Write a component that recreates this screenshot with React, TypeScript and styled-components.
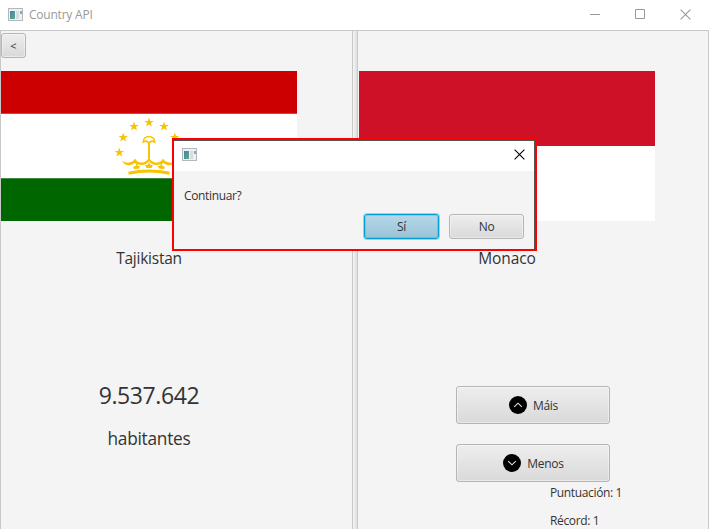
import React from "react";
import styled, { createGlobalStyle } from "styled-components";

const GlobalStyle = createGlobalStyle`
  * { box-sizing: border-box; }
  body { margin: 0; overflow: hidden; background: #fff; font-family: "Open Sans", "Noto Sans", sans-serif; color: #333; }
  svg { display: block; flex: none; }
`;

const Window = styled.div`
  position: relative;
  width: 709px;
  height: 529px;
  display: flex;
  flex-direction: column;
  overflow: hidden;
`;

const TitleBar = styled.header`
  height: 30px;
  flex: none;
  display: flex;
  align-items: center;
  padding: 0 18px 2px 8px;
  gap: 6px;
  background: #fff;
`;

const Text = styled.span<{ $size: number; $spacing?: number; $color?: string }>`
  display: block;
  white-space: nowrap;
  line-height: 20px;
  font-size: ${(p) => p.$size}px;
  letter-spacing: ${(p) => p.$spacing ?? 0}px;
  color: ${(p) => p.$color ?? "#333"};
`;

const WindowTitle = styled(Text)`
  padding-top: 2px;
`;

const Controls = styled.div`
  margin-left: auto;
  display: flex;
  gap: 35px;
`;

const SplitPane = styled.main`
  flex: 1;
  display: flex;
  border: 1px solid #c8c8c8;
  border-bottom: 0;
  background: #f4f4f4;
`;

const Pane = styled.section<{ $width: number; $inset: number }>`
  width: ${(p) => p.$width}px;
  padding-left: ${(p) => p.$inset}px;
  display: flex;
  flex-direction: column;
`;

const Divider = styled.div`
  width: 6px;
  border: solid #c8c8c8;
  border-width: 0 1px;
  background: linear-gradient(90deg, #f5f5f5, #dedede);
`;

const Toolbar = styled.div`
  height: 40px;
  padding-top: 2px;
`;

const Button = styled.button<{ $w: number; $h: number; $primary?: boolean }>`
  width: ${(p) => p.$w}px;
  height: ${(p) => p.$h}px;
  padding: 0;
  display: flex;
  align-items: center;
  justify-content: center;
  gap: 6px;
  font-family: inherit;
  border-radius: 3px;
  border: 1px solid ${(p) => (p.$primary ? "#039ed3" : "#b5b5b5")};
  background: ${(p) => (p.$primary ? "linear-gradient(#b4d8e9, #9ac3d7)" : "linear-gradient(#eeeeee, #d9d9d9)")};
  box-shadow: ${(p) =>
    p.$primary ? "0 0 0 1px #8fd6ee, inset 0 0 0 1px rgba(3,158,211,.25)" : "inset 0 0 0 1px rgba(255,255,255,.4)"};
`;

const Caption = styled.div<{ $width: number; $top: number }>`
  width: ${(p) => p.$width}px;
  margin-top: ${(p) => p.$top}px;
  display: flex;
  justify-content: center;
`;

const Choices = styled.div`
  margin: 118px 0 0 97px;
  display: flex;
  flex-direction: column;
  gap: 20px;
`;

const ChoiceButton = styled(Button)`
  padding-left: 1px;
`;

const ChoiceLabel = styled(Text)`
  padding-top: 1px;
`;

const Scores = styled.div`
  margin: 1px 0 0 191px;
  display: flex;
  flex-direction: column;
  gap: 8px;
`;

const Dialog = styled.div`
  position: absolute;
  left: 172px;
  top: 138px;
  width: 365px;
  height: 113px;
  border: 2px solid #f00;
  background: #f4f4f4;
  box-shadow: inset -1px 1px 0 #555;
  display: flex;
  flex-direction: column;
  padding: 1px 1px 0 0;
`;

const DialogBar = styled.div`
  height: 30px;
  flex: none;
  background: #fff;
  display: flex;
  align-items: center;
  justify-content: space-between;
  padding: 0 9px 3px 8px;
`;

const DialogMessage = styled.div`
  padding: 15px 0 0 10px;
`;

const DialogActions = styled.div`
  margin-top: 8px;
  padding-right: 10px;
  display: flex;
  justify-content: flex-end;
  gap: 10px;
`;

const AppIcon = () => (
  <svg width="15" height="13" viewBox="0 0 15 13">
    <defs>
      <linearGradient id="screen" x2="1" y2="1">
        <stop stopColor="#4a7fae" />
        <stop offset="1" stopColor="#5cac83" />
      </linearGradient>
    </defs>
    <path d="M0 0H15V13H0Z" fill="#b3b8bf" />
    <path d="M1 1H14V12H1Z" fill="#eef0f2" />
    <path d="M2 3H7V11H2Z" fill="url(#screen)" />
    <path d="M8 3H11V11H8Z" fill="#d9dcde" />
    <path d="M12 3H14V6H12Z" fill="#84adba" />
  </svg>
);

const CloseIcon = ({ color }: { color: string }) => (
  <svg width="11" height="11" viewBox="0 0 11 11">
    <path d="M.6 .6L10.4 10.4M10.4 .6L.6 10.4" stroke={color} strokeWidth="1.1" />
  </svg>
);

const Chevron = ({ up }: { up?: boolean }) => (
  <svg width="18" height="18" viewBox="0 0 18 18">
    <circle cx="9" cy="9" r="9" fill="#000" />
    <path d={up ? "M5.2 10.8L9 7.2L12.8 10.8" : "M5.2 7.2L9 10.8L12.8 7.2"} fill="none" stroke="#e0e0e0" strokeWidth="1.1" />
  </svg>
);

const STARS = [[0, 0], [-15, 4], [15, 4], [-25.8, 15], [25.8, 15], [-29.7, 30], [29.7, 30]];

const TajikFlag = () => (
  <svg width="296" height="150" viewBox="0 0 296 150">
    <path d="M0 0H296V150H0Z" fill="#fff" />
    <path d="M0 0H296V42.8H0Z" fill="#c00" />
    <path d="M0 107.2H296V150H0Z" fill="#060" />
    <g transform="translate(148 51.5)" fill="#f8c300">
      {STARS.map(([x, y]) => (
        <path
          key={`${x},${y}`}
          transform={`translate(${x} ${y})`}
          d="M0-5L1.2-1.6L4.8-1.6L1.9.6L3 4L0 1.9L-3 4L-1.9.6L-4.8-1.6L-1.2-1.6Z"
        />
      ))}
      <g fill="none" stroke="#f8c300">
        <path d="M-5.8 19.5C-5.8 12.3 5.8 12.3 5.8 19.5C3.5 18 1.5 18.5 0 20.5C-1.5 18.5-3.5 18-5.8 19.5Z" strokeWidth="1.5" />
        <path d="M0 20V36" strokeWidth="2" />
        <path d="M-20.5 50.7Q0 46.5 20.5 50.7" strokeWidth="3" />
      </g>
      <path d="M0 34C-1 38-4 40-8 40C-11 40-13 38-14 36C-16 40-22 42-27 38C-25 43.5-19 44-14.5 40.5C-9 44-2 42.5 0 38.5C2 42.5 9 44 14.5 40.5C19 44 25 43.5 27 38C22 42 16 40 14 36C13 38 11 40 8 40C4 40 1 38 0 34Z" />
      <path d="M0 39.5L1.5 42.5H4L2.5 45.5H-2.5L-4 42.5H-1.5ZM-12.5 41L-11 43.5L-9 43.5L-10 46L-15 46.5L-16 44.5L-13.5 43.5ZM12.5 41L11 43.5L9 43.5L10 46L15 46.5L16 44.5L13.5 43.5Z" />
    </g>
  </svg>
);

const MonacoFlag = () => (
  <svg width="296" height="150" viewBox="0 0 296 150">
    <path d="M0 0H296V150H0Z" fill="#fff" />
    <path d="M0 0H296V75H0Z" fill="#ce1126" />
  </svg>
);

export default function App() {
  return (
    <Window>
      <GlobalStyle />
      <TitleBar>
        <AppIcon />
        <WindowTitle $size={12} $spacing={-0.22} $color="#999">Country API</WindowTitle>
        <Controls>
          <svg width="10" height="11"><path d="M0 5.5H10" stroke="#999" /></svg>
          <svg width="10" height="11"><path d="M.5 .5H9.5V9.5H.5Z" fill="none" stroke="#999" /></svg>
          <CloseIcon color="#999" />
        </Controls>
      </TitleBar>
      <SplitPane>
        <Pane $width={351} $inset={0}>
          <Toolbar>
            <Button $w={25} $h={25}><Text $size={11}>&lt;</Text></Button>
          </Toolbar>
          <TajikFlag />
          <Caption $width={296} $top={27}><Text $size={15.5} $spacing={-0.25}>Tajikistan</Text></Caption>
          <Caption $width={296} $top={117}><Text $size={23} $spacing={-0.4}>9.537.642</Text></Caption>
          <Caption $width={296} $top={24}><Text $size={17.3} $spacing={-0.25}>habitantes</Text></Caption>
        </Pane>
        <Divider />
        <Pane $width={350} $inset={1}>
          <Toolbar />
          <MonacoFlag />
          <Caption $width={296} $top={27}><Text $size={15.5} $spacing={-0.1}>Monaco</Text></Caption>
          <Choices>
            <ChoiceButton $w={154} $h={38}><Chevron up /><ChoiceLabel $size={12} $spacing={-0.3}>Máis</ChoiceLabel></ChoiceButton>
            <ChoiceButton $w={154} $h={38}><Chevron /><ChoiceLabel $size={12} $spacing={-0.3}>Menos</ChoiceLabel></ChoiceButton>
          </Choices>
          <Scores>
            <Text $size={12} $spacing={-0.36}>Puntuación: 1</Text>
            <Text $size={12} $spacing={-0.36}>Récord: 1</Text>
          </Scores>
        </Pane>
      </SplitPane>
      <Dialog role="dialog">
        <DialogBar><AppIcon /><CloseIcon color="#000" /></DialogBar>
        <DialogMessage><Text $size={12} $spacing={-0.36}>Continuar?</Text></DialogMessage>
        <DialogActions>
          <Button $w={75} $h={25} $primary><Text $size={12} $spacing={-0.3}>Sí</Text></Button>
          <Button $w={75} $h={25}><Text $size={12} $spacing={-0.3}>No</Text></Button>
        </DialogActions>
      </Dialog>
    </Window>
  );
}
